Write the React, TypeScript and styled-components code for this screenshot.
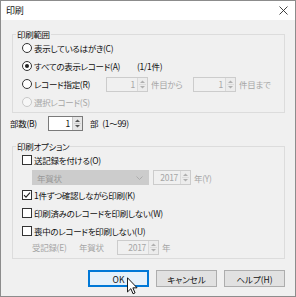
import React from "react";
import styled, { createGlobalStyle } from "styled-components";

const GlobalStyle = createGlobalStyle`
  html, body {
    margin: 0;
    padding: 0;
    background: #f0f0f0;
  }
  body {
    font-family: "Noto Sans CJK JP", "Noto Sans", sans-serif;
    font-size: 8.5px;
    letter-spacing: -0.3px;
    font-feature-settings: "palt";
    color: #111;
  }
  * {
    box-sizing: border-box;
  }
`;

const Window = styled.div`
  position: relative;
  width: 296px;
  height: 297px;
  border: 1px solid #8c8c8c;
  background: #f0f0f0;
  display: flex;
  flex-direction: column;
`;

const TitleBar = styled.div`
  height: 19px;
  flex-shrink: 0;
  background: #fff;
  display: flex;
  align-items: center;
  justify-content: space-between;
  padding: 0 7px 0 5px;
  font-size: 9px;
  line-height: 19px;
`;

const Group = styled.fieldset<{ $top: number }>`
  margin: ${p => p.$top}px 10px 0 11px;
  padding: 0 0 ${p => p.$top === 9 ? 2 : 4}px 0;
  border: 1px solid #dcdcdc;
  min-width: 0;
`;

const Legend = styled.legend`
  margin-left: 3px;
  padding: 0 1px;
  line-height: 10px;
  height: 10px;
`;

const Row = styled.div<{ $h: number; $indent?: number }>`
  height: ${p => p.$h}px;
  display: flex;
  align-items: center;
  padding-left: ${p => p.$indent ?? 9}px;
  white-space: nowrap;
`;

const Text = styled.span<{ $w?: number; $ml?: number; $off?: boolean }>`
  display: inline-block;
  ${p => (p.$w ? `width: ${p.$w}px;` : "")}
  margin-left: ${p => p.$ml ?? 0}px;
  color: ${p => (p.$off ? "#a6a6a6" : "#111")};
  line-height: 12px;
`;

const RadioCircle = styled.span<{ $checked?: boolean; $off?: boolean }>`
  width: 10px;
  height: 10px;
  border-radius: 50%;
  border: 1px solid ${p => (p.$off ? "#c8c8c8" : "#333")};
  background: ${p => (p.$off ? "#f7f7f7" : "#fff")};
  display: inline-flex;
  align-items: center;
  justify-content: center;
  margin-right: 2px;
  flex-shrink: 0;
  &::after {
    content: "";
    width: 4px;
    height: 4px;
    border-radius: 50%;
    background: #222;
    display: ${p => (p.$checked ? "block" : "none")};
  }
`;

const CheckBox = styled.span`
  width: 10px;
  height: 10px;
  border: 1px solid #333;
  background: #fff;
  display: inline-flex;
  align-items: center;
  justify-content: center;
  margin-right: 2px;
  flex-shrink: 0;
`;

const Spin = styled.div<{ $w: number; $off?: boolean; $ml?: number }>`
  width: ${p => p.$w}px;
  height: 15px;
  margin-left: ${p => p.$ml ?? 0}px;
  display: flex;
  border: 1px solid ${p => (p.$off ? "#cccccc" : "#7a7a7a")};
  background: ${p => (p.$off ? "#f0f0f0" : "#fff")};
  flex-shrink: 0;
`;

const SpinValue = styled.span<{ $off?: boolean }>`
  flex: 1;
  text-align: right;
  padding-right: 2px;
  line-height: 13px;
  color: ${p => (p.$off ? "#a6a6a6" : "#111")};
`;

const SpinButtons = styled.span<{ $off?: boolean }>`
  width: 10px;
  display: flex;
  align-items: center;
  justify-content: center;
  background: ${p => (p.$off ? "#ececec" : "#e6e6e6")};
  border-left: 1px solid ${p => (p.$off ? "#d9d9d9" : "#c8c8c8")};
`;

const Combo = styled.div`
  width: 117px;
  height: 15px;
  display: flex;
  align-items: center;
  justify-content: space-between;
  padding: 0 5px 0 4px;
  background: #cccccc;
  border: 1px solid #cccccc;
  color: #999999;
  flex-shrink: 0;
`;

const ButtonBar = styled.div`
  display: flex;
  justify-content: flex-end;
  gap: 7px;
  margin-top: 11px;
  padding-right: 10px;
`;

const Button = styled.button<{ $focus?: boolean }>`
  width: 61px;
  height: 17px;
  padding: 0;
  font: inherit;
  font-size: 8.5px;
  color: #111;
  background: ${p => (p.$focus ? "#e5f1fb" : "#e1e1e1")};
  border: 1px solid ${p => (p.$focus ? "#0078d7" : "#adadad")};
  box-shadow: ${p => (p.$focus ? "inset 0 0 0 1px #0078d7" : "none")};
`;

const Cursor = styled.svg`
  position: absolute;
  left: 126px;
  top: 276px;
`;

function SpinArrows({ off }: { off?: boolean }) {
  const c = off ? "#b0b0b0" : "#555";
  return (
    <svg width="7" height="11" viewBox="0 0 7 11">
      <path d="M1 4 L3.5 1.5 L6 4 Z" fill={c} />
      <line x1="0" y1="5.5" x2="7" y2="5.5" stroke={off ? "#dcdcdc" : "#cfcfcf"} strokeWidth="1" />
      <path d="M1 7 L3.5 9.5 L6 7 Z" fill={c} />
    </svg>
  );
}

function SpinBox({ w, value, off, ml }: { w: number; value: string; off?: boolean; ml?: number }) {
  return (
    <Spin $w={w} $off={off} $ml={ml}>
      <SpinValue $off={off}>{value}</SpinValue>
      <SpinButtons $off={off}>
        <SpinArrows off={off} />
      </SpinButtons>
    </Spin>
  );
}

function Check({ checked }: { checked?: boolean }) {
  return (
    <CheckBox>
      {checked && (
        <svg width="8" height="8" viewBox="0 0 8 8">
          <path d="M1 4.2 L3 6.2 L7 1.6" fill="none" stroke="#222" strokeWidth="1.1" />
        </svg>
      )}
    </CheckBox>
  );
}

export default function App() {
  return (
    <>
      <GlobalStyle />
      <Window>
        <TitleBar>
          <span>印刷</span>
          <svg width="9" height="9" viewBox="0 0 9 9">
            <path d="M0.5 0.5 L8.5 8.5 M8.5 0.5 L0.5 8.5" stroke="#2b2b2b" strokeWidth="0.9" />
          </svg>
        </TitleBar>

        <Group $top={9}>
          <Legend>印刷範囲</Legend>
          <Row $h={18}>
            <RadioCircle />
            <Text>表示しているはがき(C)</Text>
          </Row>
          <Row $h={18}>
            <RadioCircle $checked />
            <Text $w={103}>すべての表示レコード(A)</Text>
            <Text>(1/1件)</Text>
          </Row>
          <Row $h={18}>
            <RadioCircle />
            <Text $w={72}>レコード指定(R)</Text>
            <SpinBox w={42} value="1" off />
            <Text $w={42} $ml={3} $off>件目から</Text>
            <SpinBox w={43} value="1" off />
            <Text $ml={3} $off>件目まで</Text>
          </Row>
          <Row $h={17}>
            <RadioCircle $off />
            <Text $off>選択レコード(S)</Text>
          </Row>
        </Group>

        <Row $h={20}>
          <Text $w={38}>部数(B)</Text>
          <SpinBox w={35} value="1" />
          <Text $ml={7}>部</Text>
          <Text $ml={4}>(1～99)</Text>
        </Row>

        <Group $top={8}>
          <Legend>印刷オプション</Legend>
          <Row $h={18}>
            <Check />
            <Text>送記録を付ける(O)</Text>
          </Row>
          <Row $h={17} $indent={19}>
            <Combo>
              <span>年賀状</span>
              <svg width="7" height="4" viewBox="0 0 7 4">
                <path d="M0.5 0.5 L3.5 3.5 L6.5 0.5" fill="none" stroke="#a8a8a8" strokeWidth="0.9" />
              </svg>
            </Combo>
            <SpinBox w={38} value="2017" off ml={4} />
            <Text $ml={3} $off>年(Y)</Text>
          </Row>
          <Row $h={18}>
            <Check checked />
            <Text>1件ずつ確認しながら印刷(K)</Text>
          </Row>
          <Row $h={18}>
            <Check />
            <Text>印刷済みのレコードを印刷しない(W)</Text>
          </Row>
          <Row $h={18}>
            <Check />
            <Text>喪中のレコードを印刷しない(U)</Text>
          </Row>
          <Row $h={14} $indent={19}>
            <Text $w={47} $off>受記録(E)</Text>
            <Text $w={38} $off>年賀状</Text>
            <SpinBox w={42} value="2017" off />
            <Text $ml={3} $off>年</Text>
          </Row>
        </Group>

        <ButtonBar>
          <Button $focus>OK</Button>
          <Button>キャンセル</Button>
          <Button>ヘルプ(H)</Button>
        </ButtonBar>

        <Cursor width="11" height="18" viewBox="0 0 12 19">
          <path
            d="M0.5 0.5 L0.5 16 L4.2 12.4 L6.6 18 L8.8 17 L6.4 11.5 L11 11.5 Z"
            fill="#fff"
            stroke="#000"
            strokeWidth="1"
            strokeLinejoin="round"
          />
        </Cursor>
      </Window>
    </>
  );
}
